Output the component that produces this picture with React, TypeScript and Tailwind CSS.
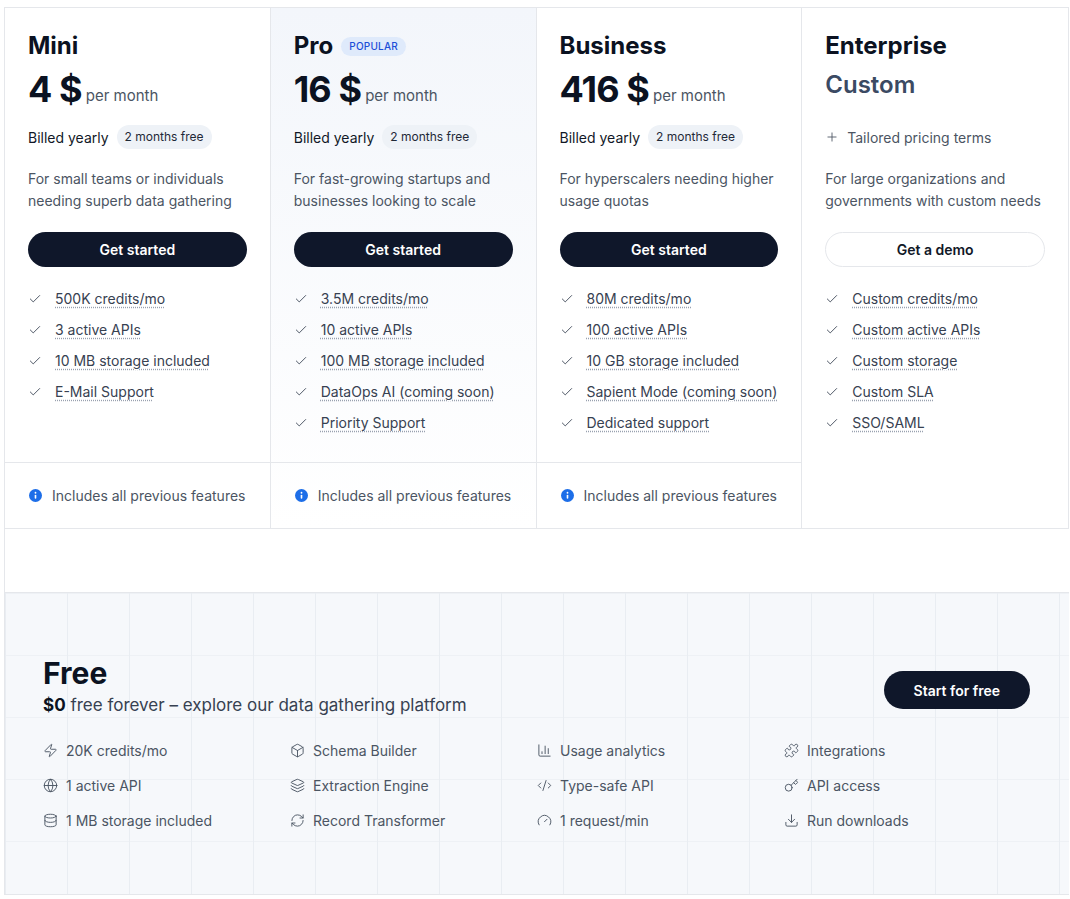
import { Check, Plus, Zap, Globe, Database, Box, Layers, RefreshCw, ChartColumn, CodeXml, Gauge, Puzzle, Key, Download } from 'lucide-react';

interface Plan {
  name: string;
  price?: string;
  custom?: boolean;
  popular?: boolean;
  desc: string[];
  cta: string;
  features: string[];
}

const plans: Plan[] = [
  { name: 'Mini', price: '4 $', desc: ['For small teams or individuals', 'needing superb data gathering'], cta: 'Get started',
    features: ['500K credits/mo', '3 active APIs', '10 MB storage included', 'E-Mail Support'] },
  { name: 'Pro', price: '16 $', popular: true, desc: ['For fast-growing startups and', 'businesses looking to scale'], cta: 'Get started',
    features: ['3.5M credits/mo', '10 active APIs', '100 MB storage included', 'DataOps AI (coming soon)', 'Priority Support'] },
  { name: 'Business', price: '416 $', desc: ['For hyperscalers needing higher', 'usage quotas'], cta: 'Get started',
    features: ['80M credits/mo', '100 active APIs', '10 GB storage included', 'Sapient Mode (coming soon)', 'Dedicated support'] },
  { name: 'Enterprise', custom: true, desc: ['For large organizations and', 'governments with custom needs'], cta: 'Get a demo',
    features: ['Custom credits/mo', 'Custom active APIs', 'Custom storage', 'Custom SLA', 'SSO/SAML'] },
];

const freeFeatures = [
  [Zap, '20K credits/mo'], [Box, 'Schema Builder'], [ChartColumn, 'Usage analytics'], [Puzzle, 'Integrations'],
  [Globe, '1 active API'], [Layers, 'Extraction Engine'], [CodeXml, 'Type-safe API'], [Key, 'API access'],
  [Database, '1 MB storage included'], [RefreshCw, 'Record Transformer'], [Gauge, '1 request/min'], [Download, 'Run downloads'],
] as const;

const InfoDot = () => (
  <svg width="13" height="13" viewBox="0 0 16 16">
    <circle cx="8" cy="8" r="8" fill="#1d6ee8" />
    <rect x="7" y="7" width="2" height="5" rx="1" fill="white" />
    <circle cx="8" cy="4.6" r="1.1" fill="white" />
  </svg>
);

const PlanCard = ({ plan, last }: { plan: Plan; last: boolean }) => (
  <div className={`flex flex-col ${last ? '' : 'border-r border-gray-200'} ${plan.popular ? 'bg-gradient-to-b from-[#f3f6fb] to-white' : 'bg-white'}`}>
    <div className="px-[23px] pt-[24px] h-[454px]">
      <div className="flex items-center gap-2 h-[28px]">
        <h3 className="text-[24px] font-bold text-[#0b1221]">{plan.name}</h3>
        {plan.popular && (
          <span className="rounded-full bg-[#dfeafb] px-2 py-[2px] text-[10px] font-medium tracking-wide text-[#1d4ed8]">POPULAR</span>
        )}
      </div>
      {plan.custom ? (
        <div className="h-[48px] flex items-center text-[24px] font-semibold text-[#3b4a63] mt-[1px]">Custom</div>
      ) : (
        <div className="h-[48px] flex items-end pb-[2px] mt-[1px]">
          <span className="text-[36px] font-bold leading-none text-[#0b1221] tracking-tight">{plan.price}</span>
          <span className="ml-1 text-[15px] text-[#4b5563]">per month</span>
        </div>
      )}
      {plan.custom ? (
        <div className="mt-[16px] flex items-center gap-2 h-[24px] text-[14px] text-[#4b5563]">
          <Plus size={14} strokeWidth={1.5} /> Tailored pricing terms
        </div>
      ) : (
        <div className="mt-[16px] flex items-center gap-2 h-[24px]">
          <span className="text-[14px] text-[#111827]">Billed yearly</span>
          <span className="rounded-full bg-[#eef2f7] px-2 py-[3px] text-[12px] text-[#1f2937]">2 months free</span>
        </div>
      )}
      <p className="mt-[19px] text-[14px] leading-[22px] text-[#4b5563]">
        {plan.desc[0]}<br />{plan.desc[1]}
      </p>
      <button className={`mt-[20px] w-full h-[35px] rounded-full text-[14px] font-semibold ${plan.custom ? 'bg-white border border-gray-200 text-[#111827]' : 'bg-[#0f172a] text-white'}`}>
        {plan.cta}
      </button>
      <ul className="mt-[16px] flex flex-col">
        {plan.features.map(f => (
          <li key={f} className="flex items-center gap-[13px] h-[31px] text-[14px] text-[#374151]">
            <Check size={14} strokeWidth={1.5} className="text-[#374151]" />
            <span className="underline decoration-dotted decoration-gray-400 underline-offset-[3px]">{f}</span>
          </li>
        ))}
      </ul>
    </div>
    {!plan.custom && (
      <div className="border-t border-gray-200 h-[66px] px-[24px] flex items-center gap-[10px] text-[14px] text-[#4b5563]">
        <InfoDot /> Includes all previous features
      </div>
    )}
  </div>
);

export default function App() {
  return (
    <div className="min-h-screen bg-white pl-[4px] pt-[7px]" style={{ fontFamily: 'Inter, "Noto Sans", sans-serif' }}>
      <div className="border-l border-gray-200 w-[1065px]">
        <div className="grid grid-cols-4 border-t border-b border-r border-gray-200">
          {plans.map((p, i) => <PlanCard key={p.name} plan={p} last={i === plans.length - 1} />)}
        </div>
        <div className="h-[63px]" />
        <div className="h-[303px] border-t border-b border-gray-200 bg-[#f6f8fb] bg-[linear-gradient(to_right,#e9edf2_1px,transparent_1px),linear-gradient(to_bottom,#eef1f5_1px,transparent_1px)] bg-[size:62px_62px] px-[38px] pt-[62px]">
          <div className="flex items-start justify-between">
            <div>
              <h2 className="text-[30px] font-bold text-[#0b1221] leading-[36px]">Free</h2>
              <p className="mt-[2px] text-[17px] text-[#374151]"><span className="font-bold text-[#0b1221]">$0</span> free forever – explore our data gathering platform</p>
            </div>
            <button className="mt-[16px] mr-[1px] h-[38px] px-[30px] rounded-full bg-[#0f172a] text-white text-[14px] font-semibold">Start for free</button>
          </div>
          <div className="mt-[22px] grid grid-cols-4 gap-y-[15px]">
            {freeFeatures.map(([Icon, label]) => (
              <div key={label} className="flex items-center gap-[8px] h-[20px] text-[14px] text-[#4b5563]">
                <Icon size={15} strokeWidth={1.5} className="text-[#4b5563]" />
                {label}
              </div>
            ))}
          </div>
        </div>
      </div>
    </div>
  );
}
